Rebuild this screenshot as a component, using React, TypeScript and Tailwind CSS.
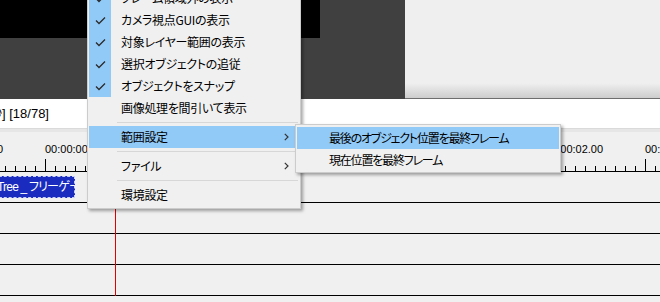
import React from "react";

const JP = "font-['Noto_Sans_CJK_JP',sans-serif] [font-feature-settings:'palt']";

function Check() {
  return (
    <svg width="11" height="9" viewBox="0 0 11 9">
      <polyline points="1,4.5 4,7.5 10,1.5" fill="none" stroke="#2b2b2b" strokeWidth="1.3" />
    </svg>
  );
}

function Chevron() {
  return (
    <svg width="5" height="8" viewBox="0 0 5 8">
      <polyline points="0.8,0.8 4,4 0.8,7.2" fill="none" stroke="#333" strokeWidth="1.2" />
    </svg>
  );
}

type ItemProps = { label: string; checked?: boolean; active?: boolean; arrow?: boolean };

function Item({ label, checked, active, arrow }: ItemProps) {
  return (
    <div className={active ? "flex items-center h-[22px] bg-[#91c9f7]" : "flex items-center h-[22px]"}>
      <div className={checked ? "w-[22px] h-full flex items-center justify-center bg-[#91c9f7]" : "w-[22px] h-full"}>
        {checked && <Check />}
      </div>
      <span className={`ml-[10px] text-[12px] leading-none text-black whitespace-nowrap tracking-[-0.3px] ${JP}`}>{label}</span>
      {arrow && (
        <span className="ml-auto mr-[10px] flex items-center">
          <Chevron />
        </span>
      )}
    </div>
  );
}

function Sep() {
  return (
    <div className="h-[7px] flex items-center">
      <div className="ml-[28px] mr-[1px] h-px flex-1 bg-[#d7d7d7]" />
    </div>
  );
}

const labels: [number, string][] = [
  [-55, "00:00:00.00"],
  [45, "00:00:00.33"],
  [145, "00:00:00.66"],
  [245, "00:00:01.00"],
  [345, "00:00:01.33"],
  [445, "00:00:01.66"],
  [545, "00:00:02.00"],
  [645, "00:00:02.33"],
];

function Ruler() {
  const ticks: React.ReactElement[] = [];
  for (let i = 0; i < 66; i++) {
    const x = 5 + i * 10 + 0.5;
    const big = (i - 4) % 10 === 0;
    ticks.push(<line key={i} x1={x} x2={x} y1={big ? 27 : 34} y2={39} stroke="#000" strokeWidth="1" />);
  }
  return (
    <div className="relative h-[40px] bg-[#f0f0f0] overflow-hidden">
      {labels.map(([x, t]) => (
        <span
          key={x}
          className="absolute top-[12px] text-[11px] leading-none text-black font-['Liberation_Sans',sans-serif] whitespace-nowrap"
          style={{ left: x }}
        >
          {t}
        </span>
      ))}
      <svg className="absolute left-0 top-0" width="660" height="40">
        {ticks}
        <line x1="0" x2="660" y1="39.5" y2="39.5" stroke="#000" strokeWidth="1" />
      </svg>
    </div>
  );
}

export default function App() {
  return (
    <div className="relative w-[660px] h-[302px] overflow-hidden bg-[#f0f0f0]">
      {/* preview area */}
      <div className="flex h-[99px]">
        <div className="w-[405px] bg-[#404040]">
          <div className="w-[320px] h-[38px] bg-black" />
        </div>
        <div className="flex-1 flex flex-col">
          <div className="flex-1 bg-linear-to-b from-[#efefef] from-85% to-[#cdcdcd]" />
          <div className="h-px bg-[#6e6e6e]" />
        </div>
      </div>

      {/* header */}
      <div className="h-[29px] bg-white flex items-center overflow-hidden">
        <span className="ml-[-11px] text-[13px] leading-none text-black whitespace-nowrap font-['Liberation_Sans','Noto_Sans_CJK_JP',sans-serif]">
          秒] [18/78]
        </span>
      </div>
      <div className="h-px bg-[#dadada]" />
      <div className="h-[3px] bg-[#e6e6e6]" />

      {/* timeline */}
      <div className="relative">
        <Ruler />
        <div className="h-[31px] border-b border-black flex items-center overflow-hidden">
          <div className="ml-[-6px] w-[81px] h-[22px] bg-[#1a2cc0] outline-1 outline-dashed outline-[#c8d0ff] -outline-offset-1 flex items-center overflow-hidden">
            <span className="pl-[3px] text-[12px] leading-none text-white whitespace-nowrap font-['Liberation_Sans','Noto_Sans_CJK_JP',sans-serif] [font-feature-settings:'palt'] tracking-[-0.8px]">
              Tree _ フリーゲーム
            </span>
          </div>
        </div>
        <div className="h-[31px] border-b border-black" />
        <div className="h-[31px] border-b border-black" />
        <div className="h-[31px] border-b border-black" />
        <div className="absolute left-[115px] top-0 bottom-0 w-px bg-[#e00000]" />
      </div>

      {/* main context menu */}
      <div className="absolute left-[87px] top-[-16px] w-[214px] border border-[#cccccc] bg-[#f0f0f0] pt-[2px] pb-[2px] px-px shadow-[2px_2px_3px_rgba(0,0,0,0.35)]">
        <Item label="フレーム領域外の表示" checked />
        <Item label="カメラ視点GUIの表示" checked />
        <Item label="対象レイヤー範囲の表示" checked />
        <Item label="選択オブジェクトの追従" checked />
        <Item label="オブジェクトをスナップ" checked />
        <Item label="画像処理を間引いて表示" />
        <Sep />
        <Item label="範囲設定" active arrow />
        <Sep />
        <Item label="ファイル" arrow />
        <Sep />
        <Item label="環境設定" />
      </div>

      {/* submenu */}
      <div className="absolute left-[295px] top-[124px] w-[266px] border border-[#cccccc] bg-[#f0f0f0] pt-[2px] pb-px px-px shadow-[2px_2px_3px_rgba(0,0,0,0.35)]">
        <div className="h-[22px] flex items-center bg-[#91c9f7]">
          <span className={`ml-[32px] text-[12px] leading-none text-black whitespace-nowrap tracking-[-1.2px] ${JP}`}>最後のオブジェクト位置を最終フレーム</span>
        </div>
        <div className="h-[22px] flex items-center">
          <span className={`ml-[32px] text-[12px] leading-none text-black whitespace-nowrap tracking-[-1.2px] ${JP}`}>現在位置を最終フレーム</span>
        </div>
      </div>
    </div>
  );
}
